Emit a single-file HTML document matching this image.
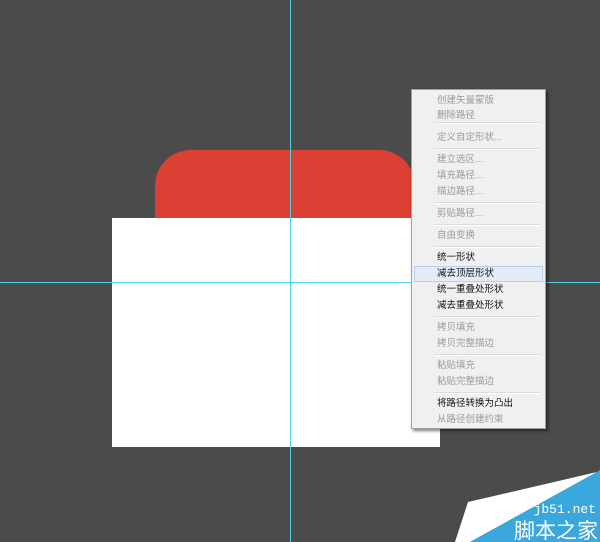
<!DOCTYPE html>
<html><head><meta charset="utf-8"><style>
body{margin:0;width:600px;height:542px;background:#4b4b4b;position:relative;overflow:hidden;font-family:"Liberation Sans","Noto Sans CJK SC",sans-serif}
.abs{position:absolute}
.menu{left:411px;top:89px;width:135px;height:340px;background:#f0f0f0;border:1px solid #a0a0a0;box-shadow:2px 2px 3px rgba(0,0,0,.5);box-sizing:border-box}
.it{position:absolute;left:25px;font-size:9.5px;color:#9a9a9a;line-height:14px}
.b{color:#111}
.sep{position:absolute;left:22px;right:4px;height:1px;background:#dcdcdc;border-bottom:1px solid #fff}
.hl{position:absolute;left:2px;right:2px;top:176px;height:16px;background:#e4ecf7;border:1px solid #b8d0ef;box-sizing:border-box}
</style></head><body>
<div class="abs" style="left:155px;top:150px;width:260px;height:120px;background:#dc3f33;border-radius:36px 36px 0 0"></div>
<div class="abs" style="left:112px;top:218px;width:328px;height:229px;background:#fff"></div>
<div class="abs" style="left:290px;top:0;width:1px;height:542px;background:#4fd3e8"></div>
<div class="abs" style="left:0;top:282px;width:600px;height:1px;background:#4fd3e8"></div>
<div class="abs menu">
<div class="hl"></div>
<div class="it" style="top:4px">创建矢量蒙版</div>
<div class="it" style="top:19px">删除路径</div>
<div class="sep" style="top:32px"></div>
<div class="it" style="top:41px">定义自定形状...</div>
<div class="sep" style="top:58px"></div>
<div class="it" style="top:63px">建立选区...</div>
<div class="it" style="top:79px">填充路径...</div>
<div class="it" style="top:95px">描边路径...</div>
<div class="sep" style="top:112px"></div>
<div class="it" style="top:117px">剪贴路径...</div>
<div class="sep" style="top:134px"></div>
<div class="it" style="top:139px">自由变换</div>
<div class="sep" style="top:156px"></div>
<div class="it b" style="top:161px">统一形状</div>
<div class="it b" style="top:177px">减去顶层形状</div>
<div class="it b" style="top:193px">统一重叠处形状</div>
<div class="it b" style="top:209px">减去重叠处形状</div>
<div class="sep" style="top:226px"></div>
<div class="it" style="top:231px">拷贝填充</div>
<div class="it" style="top:247px">拷贝完整描边</div>
<div class="sep" style="top:264px"></div>
<div class="it" style="top:269px">粘贴填充</div>
<div class="it" style="top:285px">粘贴完整描边</div>
<div class="sep" style="top:302px"></div>
<div class="it b" style="top:307px">将路径转换为凸出</div>
<div class="it" style="top:323px">从路径创建约束</div>
</div>
<svg class="abs" style="left:0;top:0" width="600" height="542">
<polygon points="468,502 597,472 470,542 455,542" fill="#fff"/>
<polygon points="597,472 600,470 600,542 470,542" fill="#3aa8dc"/>
<text x="596" y="513" text-anchor="end" font-family="Liberation Mono,monospace" font-size="13" fill="#fff">jb51.net</text>
<text x="598" y="538" text-anchor="end" font-family="Noto Sans CJK SC,sans-serif" font-size="21" fill="#fff">脚本之家</text>
</svg>
</body></html>
